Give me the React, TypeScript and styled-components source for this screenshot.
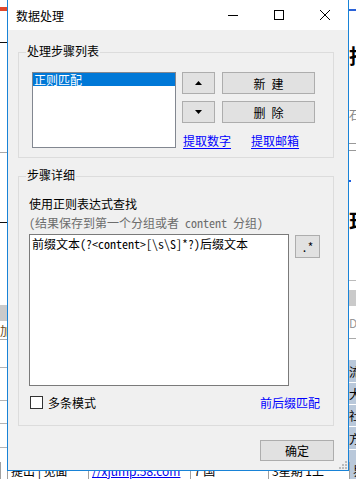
import React from "react";
import styled, { createGlobalStyle } from "styled-components";

const GlobalStyle = createGlobalStyle`
  html, body {
    margin: 0;
    padding: 0;
    background: #fff;
  }
  body {
    width: 356px;
    height: 479px;
    overflow: hidden;
    font-family: "Noto Sans Mono CJK SC", "Noto Sans CJK SC", sans-serif;
    font-size: 12px;
    color: #000;
  }
`;

/* ---------- the application peeking out behind the dialog ---------- */

const Desktop = styled.div`
  position: relative;
  width: 356px;
  height: 479px;
  overflow: hidden;
  display: flex;
  flex-direction: column;
`;

const Behind = styled.div`
  display: flex;
  justify-content: space-between;
  height: 462px;
  flex: none;
`;

const Strip = styled.div`
  width: 7px;
  display: flex;
  flex-direction: column;
  overflow: hidden;
`;

const Seg = styled.div<{ $h: number; $bg?: string; $line?: string; $color?: string; $big?: boolean }>`
  flex: none;
  height: ${(p) => p.$h}px;
  box-sizing: border-box;
  background: ${(p) => p.$bg || "#fff"};
  border-bottom: ${(p) => (p.$line ? `1px solid ${p.$line}` : "none")};
  color: ${(p) => p.$color || "#000"};
  font-family: "Noto Sans CJK SC", sans-serif;
  font-size: ${(p) => (p.$big ? 20 : 12)}px;
  font-weight: ${(p) => (p.$big ? 700 : 400)};
  line-height: ${(p) => p.$h}px;
  white-space: nowrap;
  overflow: hidden;
`;

const Dot = styled.div`
  width: 2px;
  height: 2px;
  background: #1f5fe0;
`;

const BottomRow = styled.div`
  display: grid;
  grid-template-columns: 7px 81px 102px 78px 81px 7px;
  height: 17px;
  flex: none;
`;

const Cell = styled.div<{ $bg?: string; $link?: boolean }>`
  box-sizing: border-box;
  border-left: 1px solid #a0a0a0;
  background: ${(p) => p.$bg || "#fff"};
  padding-left: 3px;
  font-family: "Noto Sans CJK SC", sans-serif;
  font-size: 12px;
  line-height: 17px;
  white-space: nowrap;
  overflow: hidden;
  color: ${(p) => (p.$link ? "#0000ee" : "#000")};
  text-decoration: ${(p) => (p.$link ? "underline" : "none")};
`;

type SegDef = { h: number; bg?: string; line?: string; color?: string; big?: boolean; text?: string; dot?: boolean };

const leftSegs: SegDef[] = [
  { h: 7 },
  { h: 4, bg: "#e2492b" },
  { h: 32, line: "#111" },
  { h: 110, line: "#a8a8a8" },
  { h: 70, line: "#111" },
  { h: 82 },
  { h: 16, bg: "#cacaca" },
  { h: 19, line: "#aaa", text: "加", color: "#6a4a20" },
  { h: 28, line: "#b4b4b4" },
  { h: 33, line: "#b4b4b4" },
  { h: 23, line: "#b4b4b4" },
  { h: 24, line: "#b4b4b4" },
  { h: 14 },
];

const rightSegs: SegDef[] = [
  { h: 9 },
  { h: 2, bg: "#2a62d8" },
  { h: 32 },
  { h: 25, big: true, text: "批" },
  { h: 38 },
  { h: 18, text: "石", color: "#888" },
  { h: 20, line: "#999" },
  { h: 7, line: "#999" },
  { h: 29 },
  { h: 2, dot: true },
  { h: 25 },
  { h: 28, big: true, text: "珏" },
  { h: 46, line: "#bbb" },
  { h: 9 },
  { h: 16, bg: "#cacaca" },
  { h: 33, line: "#aaa", text: "Do", color: "#999" },
  { h: 21 },
  { h: 23, bg: "#b9c8da", line: "#fff", text: "流" },
  { h: 22, bg: "#b9c8da", line: "#fff", text: "大" },
  { h: 22, bg: "#b9c8da", line: "#fff", text: "社" },
  { h: 23, bg: "#b9c8da", line: "#fff", text: "方" },
  { h: 12, bg: "#b9c8da" },
];

const renderSegs = (segs: SegDef[]) =>
  segs.map((s, i) => (
    <Seg key={i} $h={s.h} $bg={s.bg} $line={s.line} $color={s.color} $big={s.big}>
      {s.dot ? <Dot /> : s.text}
    </Seg>
  ));

/* ---------- the dialog window ---------- */

const Window = styled.div`
  position: absolute;
  left: 7px;
  top: -1px;
  width: 342px;
  height: 472px;
  box-sizing: border-box;
  border: 1px solid #1883d7;
  background: #f0f0f0;
  display: flex;
  flex-direction: column;
`;

const TitleBar = styled.div`
  height: 30px;
  flex: none;
  background: #fff;
  display: flex;
  align-items: center;
`;

const Title = styled.div`
  flex: 1;
  padding-left: 8px;
  font-family: "Noto Sans CJK SC", sans-serif;
  font-size: 12px;
`;

const CaptionButton = styled.div`
  width: 46px;
  height: 30px;
  display: flex;
  align-items: center;
  justify-content: center;
`;

const Body = styled.div`
  flex: 1;
  position: relative;
  display: flex;
  flex-direction: column;
  padding: 22px 14px 0 10px;
`;

const Group = styled.div<{ $h: number; $mt?: number }>`
  position: relative;
  flex: none;
  height: ${(p) => p.$h}px;
  margin-top: ${(p) => p.$mt || 0}px;
  box-sizing: border-box;
  border: 1px solid #dcdcdc;
`;

const Legend = styled.span`
  position: absolute;
  left: 7px;
  top: -9px;
  padding: 0 1px;
  line-height: 13px;
  background: #f0f0f0;
`;

const ListRow = styled.div`
  display: flex;
  gap: 6px;
  padding: 19px 0 0 13px;
`;

const ListBox = styled.div`
  width: 144px;
  height: 76px;
  box-sizing: border-box;
  border: 1px solid #828790;
  background: #fff;
`;

const ListItem = styled.div<{ $selected?: boolean }>`
  height: 13px;
  line-height: 13px;
  padding-left: 1px;
  background: ${(p) => (p.$selected ? "#0078d7" : "transparent")};
  color: ${(p) => (p.$selected ? "#fff" : "#000")};
`;

const ButtonColumn = styled.div`
  display: flex;
  flex-direction: column;
  gap: 7px;
`;

const ButtonRow = styled.div`
  display: flex;
  gap: 7px;
`;

const Btn = styled.button<{ $w: number; $h: number }>`
  width: ${(p) => p.$w}px;
  height: ${(p) => p.$h}px;
  box-sizing: border-box;
  flex: none;
  margin: 0;
  padding: 0;
  border: 1px solid #adadad;
  background: #e1e1e1;
  font-family: inherit;
  font-size: 12px;
  color: #000;
  display: flex;
  align-items: center;
  justify-content: center;
  white-space: pre;
`;

const LinkRow = styled.div`
  display: flex;
  gap: 20px;
  padding-left: 1px;
  margin-top: 4px;
`;

const Link = styled.span<{ $underline?: boolean }>`
  color: #0000ff;
  line-height: 14px;
  text-decoration: ${(p) => (p.$underline ? "underline" : "none")};
  text-underline-offset: 2px;
  cursor: pointer;
`;

const Detail = styled.div`
  display: flex;
  flex-direction: column;
  padding: 17px 13px 0 10px;
`;

const Line = styled.div<{ $muted?: boolean }>`
  line-height: 19px;
  color: ${(p) => (p.$muted ? "#6d6d6d" : "#000")};
  white-space: nowrap;
`;

const EditorRow = styled.div`
  display: flex;
  gap: 6px;
  margin-top: 2px;
  align-items: flex-start;
`;

const Editor = styled.textarea`
  width: 261px;
  height: 152px;
  box-sizing: border-box;
  margin: 0;
  padding: 1px 2px;
  border: 1px solid #7a7a7a;
  background: #fff;
  font-family: inherit;
  font-size: 12px;
  line-height: 15px;
  color: #000;
  resize: none;
  outline: none;
`;

const OptionsRow = styled.div`
  display: flex;
  align-items: center;
  margin-top: 10px;
  height: 13px;
`;

const CheckBox = styled.span`
  width: 13px;
  height: 13px;
  box-sizing: border-box;
  margin-left: 1px;
  border: 1px solid #333;
  background: #fff;
`;

const CheckLabel = styled.span`
  margin-left: 5px;
  flex: 1;
`;

const Footer = styled.div`
  display: flex;
  justify-content: flex-end;
  margin-top: 14px;
`;

const Grip = styled.svg`
  position: absolute;
  right: 1px;
  bottom: 1px;
`;

const Triangle = ({ down }: { down?: boolean }) => (
  <svg width="7" height="4" viewBox="0 0 7 4">
    <polygon points={down ? "0,0 7,0 3.5,4" : "3.5,0 7,4 0,4"} fill="#000" />
  </svg>
);

const App: React.FC = () => {
  return (
    <>
      <GlobalStyle />
      <Desktop>
        <Behind>
          <Strip>{renderSegs(leftSegs)}</Strip>
          <Strip>{renderSegs(rightSegs)}</Strip>
        </Behind>
        <BottomRow>
          <Cell />
          <Cell>提出 | 见面</Cell>
          <Cell $link>//xjump.58.com</Cell>
          <Cell>7 国</Cell>
          <Cell>3星期 1上</Cell>
          <Cell $bg="#b9c8da">界</Cell>
        </BottomRow>

        <Window>
          <TitleBar>
            <Title>数据处理</Title>
            <CaptionButton>
              <svg width="10" height="10" viewBox="0 0 10 10">
                <rect x="0" y="5" width="10" height="1" fill="#000" />
              </svg>
            </CaptionButton>
            <CaptionButton>
              <svg width="10" height="10" viewBox="0 0 10 10">
                <rect x="0.5" y="0.5" width="9" height="9" fill="none" stroke="#000" />
              </svg>
            </CaptionButton>
            <CaptionButton>
              <svg width="10" height="10" viewBox="0 0 10 10">
                <path d="M0 0 L10 10 M10 0 L0 10" stroke="#000" strokeWidth="1" />
              </svg>
            </CaptionButton>
          </TitleBar>

          <Body>
            <Group $h={106}>
              <Legend>处理步骤列表</Legend>
              <ListRow>
                <ListBox>
                  <ListItem $selected>正则匹配</ListItem>
                </ListBox>
                <ButtonColumn>
                  <ButtonRow>
                    <Btn $w={33} $h={22}>
                      <Triangle />
                    </Btn>
                    <Btn $w={93} $h={22}>新 建</Btn>
                  </ButtonRow>
                  <ButtonRow>
                    <Btn $w={33} $h={22}>
                      <Triangle down />
                    </Btn>
                    <Btn $w={93} $h={22}>删 除</Btn>
                  </ButtonRow>
                  <LinkRow>
                    <Link $underline>提取数字</Link>
                    <Link $underline>提取邮箱</Link>
                  </LinkRow>
                </ButtonColumn>
              </ListRow>
            </Group>

            <Group $h={250} $mt={18}>
              <Legend>步骤详细</Legend>
              <Detail>
                <Line>使用正则表达式查找</Line>
                <Line $muted>(结果保存到第一个分组或者 content 分组)</Line>
                <EditorRow>
                  <Editor readOnly defaultValue={"前缀文本(?<content>[\\s\\S]*?)后缀文本"} />
                  <Btn $w={25} $h={23} style={{ marginTop: 1 }}>.*</Btn>
                </EditorRow>
                <OptionsRow>
                  <CheckBox />
                  <CheckLabel>多条模式</CheckLabel>
                  <Link>前后缀匹配</Link>
                </OptionsRow>
              </Detail>
            </Group>

            <Footer>
              <Btn $w={74} $h={21}>确定</Btn>
            </Footer>

            <Grip width="8" height="8" viewBox="0 0 8 8">
              <rect x="6" y="0" width="2" height="2" fill="#bcbcbc" />
              <rect x="3" y="3" width="2" height="2" fill="#bcbcbc" />
              <rect x="6" y="3" width="2" height="2" fill="#bcbcbc" />
              <rect x="0" y="6" width="2" height="2" fill="#bcbcbc" />
              <rect x="3" y="6" width="2" height="2" fill="#bcbcbc" />
              <rect x="6" y="6" width="2" height="2" fill="#bcbcbc" />
            </Grip>
          </Body>
        </Window>
      </Desktop>
    </>
  );
};

export default App;
